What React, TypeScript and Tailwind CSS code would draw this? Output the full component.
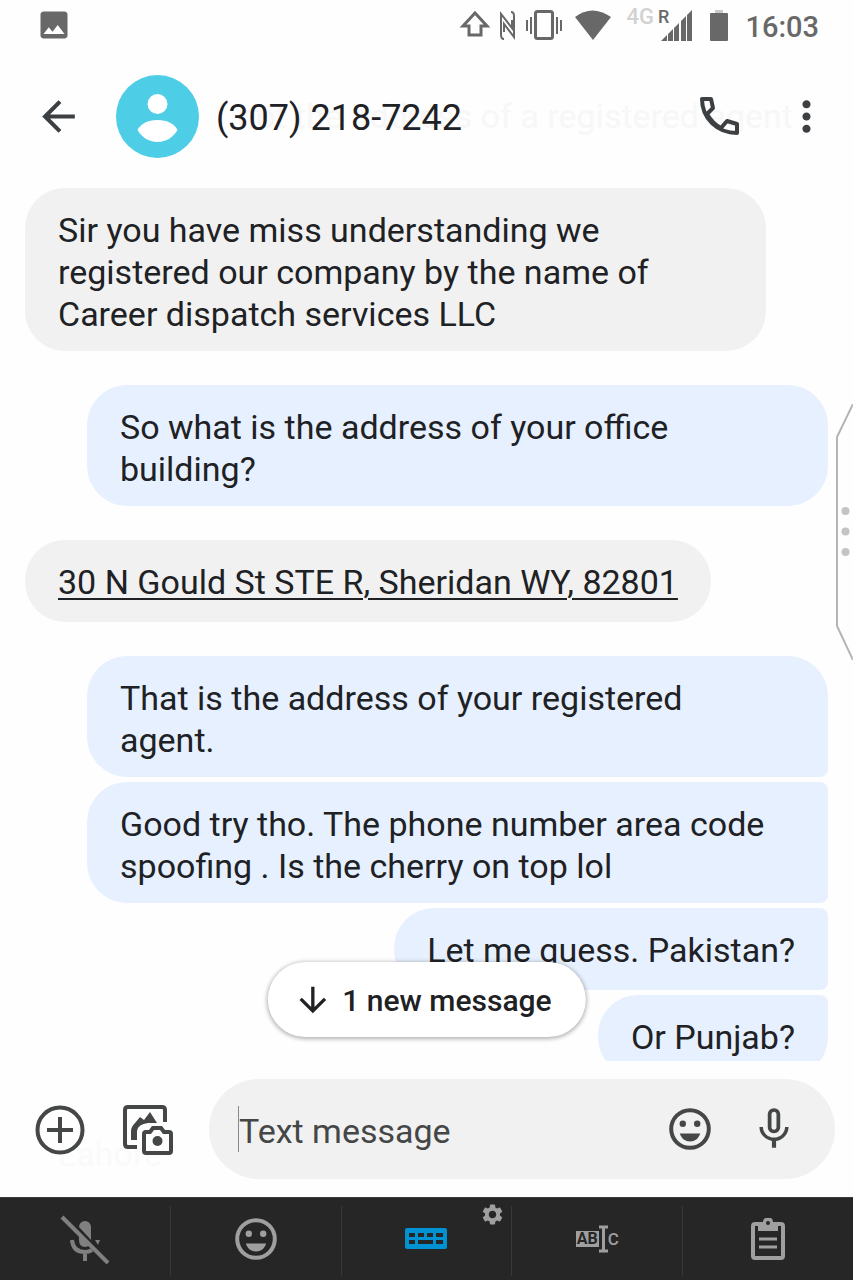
import React from "react";
import clsx from "clsx";
import {
  MdArrowBack,
  MdArrowDownward,
  MdImage,
  MdMicNone,
  MdMoreVert,
  MdSettings,
} from "react-icons/md";

interface Message {
  id: number;
  text: string;
  sent: boolean;
  href?: string;
  /** Position in a run of messages from the same sender. */
  run?: "first" | "middle" | "last";
}

const MESSAGES: Message[] = [
  {
    id: 1,
    text: "Sir you have miss understanding we\nregistered our company by the name of\nCareer dispatch services LLC",
    sent: false,
  },
  {
    id: 2,
    text: "So what is the address of your office\nbuilding?",
    sent: true,
  },
  {
    id: 3,
    text: "30 N Gould St STE R, Sheridan WY, 82801",
    sent: false,
    href: "#address",
  },
  {
    id: 4,
    text: "That is the address of your registered\nagent.",
    sent: true,
    run: "first",
  },
  {
    id: 5,
    text: "Good try tho. The phone number area code\nspoofing . Is the cherry on top lol",
    sent: true,
    run: "middle",
  },
  { id: 6, text: "Let me guess. Pakistan?", sent: true, run: "middle" },
  { id: 7, text: "Or Punjab?", sent: true, run: "last" },
];

function SmileyIcon() {
  return (
    <svg width="42" height="42" viewBox="0 0 42 42" aria-hidden="true">
      <circle cx="21" cy="21" r="18.8" fill="none" stroke="currentColor" strokeWidth="4" />
      <circle cx="13.8" cy="15.8" r="3.2" fill="currentColor" />
      <circle cx="28.200" cy="15.8" r="3.2" fill="currentColor" />
      <path d="M10.800 25.500h20.400c-1.500 5-5.500 8-10.200 8s-8.700-3-10.200-8z" fill="currentColor" />
    </svg>
  );
}

function StatusBar() {
  return (
    <div className="flex h-[50px] shrink-0 items-center justify-between pr-[34px] pl-[36px] text-[#686868]">
      <MdImage size={36} />
      <div className="flex items-center">
        <svg width="32" height="32" viewBox="0 0 32 32" fill="none" stroke="currentColor" strokeWidth="3">
          <path d="M16 4 4 17h6v9h12v-9h6z" />
        </svg>
        <svg className="ml-2" width="18" height="32" viewBox="0 0 18 32" fill="none" stroke="currentColor" strokeWidth="2">
          <path d="M5 30q-3 0-3-4V5l11 14v-8M12 3q3 0 3 4v21L5 15v8" />
        </svg>
        <svg className="ml-2" width="38" height="32" viewBox="0 0 38 32" fill="none" stroke="currentColor">
          <rect x="10.500" y="2.500" width="17" height="27" rx="2" strokeWidth="3" />
          <path d="M2 11v11M6 8v17M32 8v17M36 11v11" strokeWidth="2" />
        </svg>
        <svg className="ml-3" width="36" height="32" viewBox="0 0 36 32" fill="currentColor">
          <path d="M0 8q17-13 36 0L18 31z" />
        </svg>
        <span className="mb-4 ml-4 text-[22px] leading-6 font-medium text-[#d2d2d2]">4G</span>
        <span className="mb-4 ml-1 text-[18px] leading-5 font-medium">R</span>
        <svg className="-ml-2" width="32" height="32" viewBox="0 0 32 32" fill="currentColor">
          <path d="M0 32 6 26v6zM7 25l5-5v12H7zM13 19l5-5v18h-5zM20 12l5-5v25h-5zM26 6l5-5v31h-5z" />
        </svg>
        <svg className="ml-4" width="20" height="32" viewBox="0 0 20 32">
          <path d="M6 1h8v4H6z" fill="#c9c9c9" />
          <rect x="1" y="4" width="18" height="28" rx="1" fill="currentColor" />
        </svg>
        <time className="ml-4 pt-1 text-[29px] leading-8 font-medium">16:03</time>
      </div>
    </div>
  );
}

function ChatHeader() {
  return (
    <header className="relative flex h-[132px] shrink-0 items-center pr-[22px] pl-[34px] text-[#3c4043]">
      {/* Scrolled message showing faintly through the header */}
      <span
        aria-hidden="true"
        className="absolute right-[60px] text-[34px] leading-[42px] whitespace-nowrap text-[#f7f7f7]"
      >
        not the address of a registered agent
      </span>
      <button type="button" aria-label="Back" className="relative">
        <MdArrowBack size={49} />
      </button>
      <span className="relative ml-[33px] size-[83px] rounded-full bg-[#4dcde6]">
        <svg viewBox="0 0 83 83" fill="#fff" aria-hidden="true">
          <circle cx="41.500" cy="29" r="10" />
          <path d="M21.500 55c3-6 10-10 20-10s17 4 20 10c-4 7-11 12-20 12s-16-5-20-12z" />
        </svg>
      </span>
      <h1 className="relative ml-[17px] flex-1 pt-1 text-[36px] leading-[42px] text-[#202124]">
        (307) 218-7242
      </h1>
      <button type="button" aria-label="Call" className="relative">
        <svg width="40" height="40" viewBox="0 0 40 40" fill="none" stroke="currentColor" strokeWidth="4" strokeLinejoin="round">
          <path d="M3 3h9l2 9-6 6C12 25 16 29 22 32l6-7 10 3v9C18 37 3 22 3 3z" />
        </svg>
      </button>
      <button type="button" aria-label="More options" className="relative ml-[43px]">
        <MdMoreVert size={49} />
      </button>
    </header>
  );
}

function Bubble({ message }: { message: Message }) {
  const { text, sent, href, run } = message;
  return (
    <li
      className={clsx(
        "flex min-h-[82px] max-w-[741px] rounded-[40px] px-[33px] pt-[21px] pb-4 text-[34px] leading-[42px] whitespace-pre-line text-[#202124]",
        sent ? "self-end bg-[#e7f0fe]" : "self-start bg-[#f1f1f1]",
        // multi-line messages always take the full bubble width
        text.includes("\n") && "w-full",
        run === "first" && "rounded-br-lg",
        run === "middle" && "rounded-r-lg",
        run === "last" && "rounded-tr-lg",
        run === "middle" || run === "last" ? "mt-[5px]" : "mt-[34px] first:mt-0",
      )}
    >
      {href ? (
        <a href={href} className="underline decoration-2 underline-offset-4">
          {text}
        </a>
      ) : (
        <p>{text}</p>
      )}
    </li>
  );
}

/** Pull-out handle of the system edge panel. */
function EdgeHandle() {
  return (
    <svg
      className="absolute top-[404px] right-0"
      width="18"
      height="256"
      viewBox="0 0 18 256"
      fill="none"
      stroke="#b4b4b4"
      strokeWidth="2"
      aria-hidden="true"
    >
      <path d="M18 0 2 33v189l16 34" />
      <g fill="#c4c4c4" stroke="none">
        <circle cx="10.500" cy="107" r="4" />
        <circle cx="10.500" cy="127.500" r="4" />
        <circle cx="10.500" cy="148" r="4" />
      </g>
    </svg>
  );
}

function Composer() {
  return (
    <form
      className="relative flex h-[136px] shrink-0 items-start pt-[18px] pr-[18px] pl-[34px] text-[#444746]"
      onSubmit={(event) => event.preventDefault()}
    >
      <span
        aria-hidden="true"
        className="absolute top-[72px] left-[58px] text-[34px] leading-[42px] text-[#fafafa]"
      >
        Lahore
      </span>
      <div className="relative flex h-[100px] items-center gap-[36px]">
        <button type="button" aria-label="Add attachment">
          <svg width="52" height="52" viewBox="0 0 52 52" fill="none" stroke="currentColor" strokeWidth="4">
            <circle cx="26" cy="27" r="22.500" />
            <path d="M26 14v26M13 27h26" />
          </svg>
        </button>
        <button type="button" aria-label="Gallery and camera">
          <svg width="52" height="52" viewBox="0 0 52 52" fill="none" stroke="currentColor" strokeWidth="4">
            <path d="M43 19V7q0-3-3-3H6Q3 4 3 7v34q0 3 3 3h9" />
            <path d="M9 37V28q0-4 4-8l5-6 4 3 6-8 7 11H26q-10 1-11 8v9z" fill="currentColor" stroke="none" />
            <path d="M22 31q0-2 2-2h4l3-4h8l3 4h5q2 0 2 2v17q0 2-2 2H24q-2 0-2-2z" />
            <circle cx="35.500" cy="38" r="5" fill="currentColor" stroke="none" />
          </svg>
        </button>
      </div>
      <div className="relative ml-[35px] flex h-[100px] min-w-0 flex-1 items-center rounded-full bg-[#f1f1f1] pr-[36px] pl-[29px]">
        <span className="h-[46px] w-px shrink-0 bg-[#8a8a8a]" />
        <input
          type="text"
          aria-label="Text message"
          placeholder="Text message"
          className="min-w-0 flex-1 bg-transparent pt-1 text-[34px] leading-[42px] outline-none placeholder:text-[#444746]"
        />
        <button type="button" aria-label="Emoji">
          <SmileyIcon />
        </button>
        <button type="button" aria-label="Voice message" className="ml-[38px]">
          <MdMicNone size={50} />
        </button>
      </div>
    </form>
  );
}

function KeyboardBar() {
  const key = "relative flex flex-1 items-center justify-center pb-[5px]";
  return (
    <div className="flex h-[83px] shrink-0 border-t border-[#3a3a3a] bg-[#262626] text-[#9f9f9f]">
      <div className="mt-2 mb-1 flex flex-1 divide-x divide-[#383838]">
        <button type="button" aria-label="Voice input off" className={clsx(key, "text-[#808080]")}>
          <svg width="50" height="50" viewBox="0 0 50 50" fill="none" stroke="currentColor">
            <path d="M19 13a6 6 0 0 1 12 0v13zM19 20l11 11q-3 2-5 2-6 0-6-7z" fill="currentColor" stroke="none" />
            <path d="M12 26q1 12 13 12 4 0 7-2M25 38v9" strokeWidth="4" />
            <path d="M35 26h5l-2 5z" fill="currentColor" stroke="none" />
            <path d="m2 3 46 46" strokeWidth="4" />
          </svg>
        </button>
        <button type="button" aria-label="Emoji keyboard" className={key}>
          <SmileyIcon />
        </button>
        <button type="button" aria-label="Keyboard" className={key}>
          <svg width="42" height="21" viewBox="0 0 42 21">
            <rect width="42" height="21" rx="2" fill="#0092d3" />
            <path
              d="M4 7h6M13 7h6M22 7h6M31 7h7M4 14h6M13 14h15M31 14h7"
              stroke="#262626"
              strokeWidth="4"
            />
          </svg>
          <MdSettings size={25} className="absolute top-[-4px] right-[6px]" />
        </button>
        <button type="button" aria-label="Text editing" className={key}>
          <span className="bg-[#9f9f9f] px-px text-[16px] leading-4 font-bold text-[#262626]">AB</span>
          <svg width="9" height="28" viewBox="0 0 9 28" fill="none" stroke="currentColor" strokeWidth="3">
            <path d="M0 2h9M0 26h9M4.500 2v24" />
          </svg>
          <span className="text-[17px] leading-5 font-medium">C</span>
        </button>
        <button type="button" aria-label="Clipboard" className={key}>
          <svg width="34" height="42" viewBox="0 0 34 42" fill="none">
            <rect x="2" y="6" width="30" height="34" rx="2" stroke="currentColor" strokeWidth="4" />
            <path d="M7 4h5a5 5 0 0 1 10 0h5v9H7z" fill="currentColor" />
            <circle cx="17" cy="5" r="2" fill="#262626" />
            <path d="M8 21h18M8 29h18" stroke="currentColor" strokeWidth="3" />
          </svg>
        </button>
      </div>
    </div>
  );
}

export default function App() {
  const [showNew, setShowNew] = React.useState(true);

  return (
    <div className="relative flex h-screen flex-col overflow-hidden bg-[#fefefe] font-[Roboto,sans-serif]">
      <StatusBar />
      <ChatHeader />
      <main className="relative flex min-h-0 flex-1 flex-col">
        <ul className="flex min-h-0 flex-1 flex-col overflow-y-auto px-[25px] pt-[6px] [scrollbar-width:none] *:shrink-0">
          {MESSAGES.map((message) => (
            <Bubble key={message.id} message={message} />
          ))}
        </ul>
        {showNew && (
          <button
            type="button"
            className="absolute bottom-[24px] left-1/2 flex h-[75px] -translate-x-1/2 items-center gap-[10px] rounded-full bg-white pr-[34px] pl-[25px] text-[30px] leading-9 font-medium whitespace-nowrap text-[#202124] shadow-[0_1px_4px_1px_rgba(0,0,0,0.3)]"
            onClick={() => setShowNew(false)}
          >
            <MdArrowDownward size={40} />
            <span className="pt-[2px]">1 new message</span>
          </button>
        )}
      </main>
      <Composer />
      <KeyboardBar />
      <EdgeHandle />
    </div>
  );
}
